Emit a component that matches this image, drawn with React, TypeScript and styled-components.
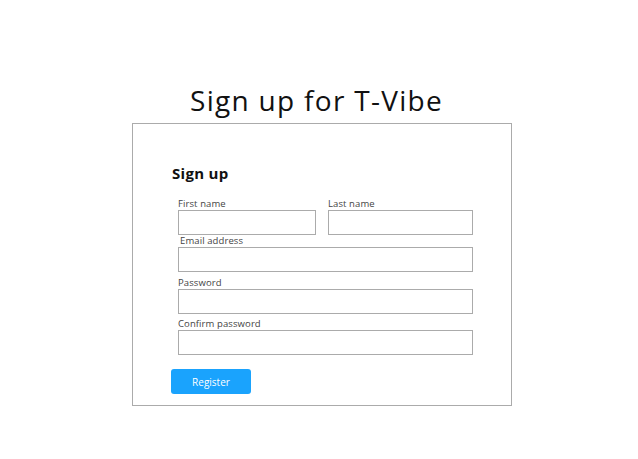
import React from "react";
import styled, { createGlobalStyle } from "styled-components";

const Global = createGlobalStyle`
  html, body { margin: 0; padding: 0; background: #ffffff; }
  body { font-family: "Open Sans", "DejaVu Sans", sans-serif; color: #111; }
  * { box-sizing: border-box; }
`;

const Page = styled.div`
  width: 638px;
  height: 459px;
  display: flex;
  flex-direction: column;
  align-items: flex-start;
  padding-top: 82px;
`;

const Title = styled.h1`
  margin: 0 0 0 190px;
  font-size: 28px;
  line-height: 36px;
  font-weight: 400;
  color: #111;
  letter-spacing: 1.3px;
  height: 41px;
`;

const Card = styled.div`
  margin-left: 132px;
  width: 380px;
  height: 283px;
  border: 1px solid #ababab;
  padding: 36px 0 0 39px;
`;

const Heading = styled.h2`
  margin: 0;
  font-size: 15px;
  line-height: 26px;
  font-weight: 700;
  color: #111;
  letter-spacing: 0.3px;
`;

const Form = styled.div`
  margin-left: 6px;
  width: 295px;
  display: flex;
  flex-direction: column;
`;

const Row = styled.div`
  display: flex;
  gap: 12px;
  margin-top: 12px;
`;

const Field = styled.div<{ $grow?: number; $top?: number; $indent?: number }>`
  display: flex;
  flex-direction: column;
  flex: ${(p) => (p.$grow ? `0 0 ${p.$grow}px` : "1 1 auto")};
  margin-top: ${(p) => p.$top ?? 0}px;
  label {
    padding-left: ${(p) => p.$indent ?? 0}px;
  }
`;

const Label = styled.label`
  display: block;
  font-size: 9.5px;
  line-height: 11px;
  color: #444;
  margin-bottom: 1px;
  white-space: nowrap;
  letter-spacing: 0.1px;
`;

const Input = styled.input`
  display: block;
  width: 100%;
  height: 25px;
  border: 1px solid #ababab;
  background: #fff;
  padding: 0 6px;
  font-family: inherit;
  outline: none;
`;

const Button = styled.button`
  margin-top: 14px;
  margin-left: -1px;
  width: 80px;
  height: 25px;
  border: none;
  border-radius: 3px;
  background: #1aa3fd;
  color: #fff;
  font-family: inherit;
  font-size: 10px;
  cursor: pointer;
  padding: 0;
`;

export default function App() {
  return (
    <>
      <Global />
      <Page>
        <Title>Sign up for T-Vibe</Title>
        <Card>
          <Heading>Sign up</Heading>
          <Form>
            <Row>
              <Field $grow={138}>
                <Label>First name</Label>
                <Input />
              </Field>
              <Field>
                <Label>Last name</Label>
                <Input />
              </Field>
            </Row>
            <Field $top={0} $indent={2}>
              <Label>Email address</Label>
              <Input />
            </Field>
            <Field $top={5}>
              <Label>Password</Label>
              <Input />
            </Field>
            <Field $top={4}>
              <Label>Confirm password</Label>
              <Input />
            </Field>
          </Form>
          <Button>Register</Button>
        </Card>
      </Page>
    </>
  );
}
